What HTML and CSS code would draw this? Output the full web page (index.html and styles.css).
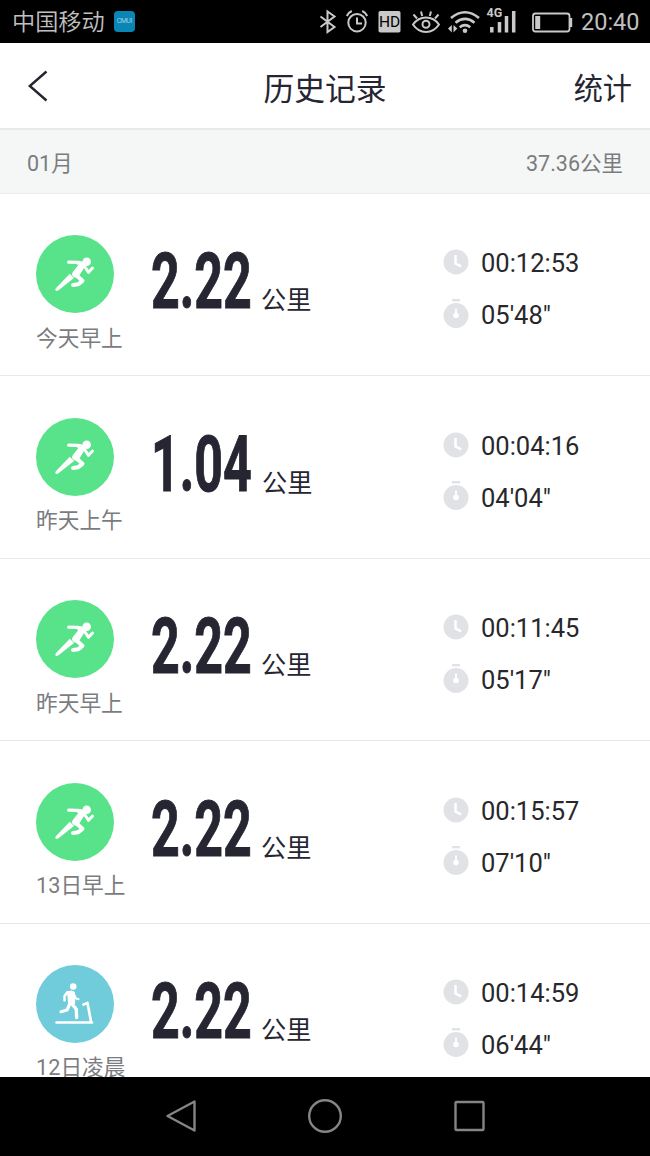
FILE: index.html
```html
<!DOCTYPE html>
<html lang="zh-CN">
<head>
<meta charset="utf-8">
<title>历史记录</title>
<link rel="stylesheet" href="styles.css">
</head>
<body>
<svg class="defs" width="0" height="0" aria-hidden="true">
  <symbol id="runner" viewBox="0 0 78 78">
    <g fill="none" stroke="#fff" stroke-linecap="round" stroke-linejoin="round">
      <path d="M32.700 27.200l8 .2 5 2" stroke-width="3.300"/>
      <path d="M49 32l3.500 5.300 4-4.300" stroke-width="3"/>
      <path d="M40.500 40.500l6 5.300-4.500 3.500-5 .6" stroke-width="4"/>
    </g>
    <path d="M41.500 25.800q4-.2 6.500 2.200q2.200 2.600 0 5l-5.700 9.200q-3 1.600-5.700-1.200q-1.400-2 .2-4l5.200-6.600z" fill="#fff"/>
    <path d="M33.800 38.700l4.200 4.300-15.800 12.500q-2.500 1.200-2.900-.8q0-.8 1-1.900z" fill="#fff"/>
    <circle cx="50.700" cy="26.700" r="4.300" fill="#fff"/>
  </symbol>
  <symbol id="treadmill" viewBox="0 0 78 78">
    <circle cx="37.200" cy="21.500" r="3.300" fill="#fff"/>
    <path d="M31.500 26.800q4.500-2 7 .5l.2 11.500-6 .5z" fill="#fff" stroke="#fff" stroke-linejoin="round"/>
    <g fill="none" stroke="#fff" stroke-linecap="round" stroke-linejoin="round">
      <path d="M31.500 27l-3 4v4.500" stroke-width="2.400"/>
      <path d="M38 29.500l2 4 2.500 .7" stroke-width="2.200"/>
      <path d="M34 38.500l-3 6.500-6 1.700" stroke-width="3.200"/>
      <path d="M36 39l4.200 5 .5 8.500" stroke-width="3.400"/>
      <path d="M20.500 57.500h35.500M47.500 39.500l4-1.500 3.500 18.500" stroke-width="2.700"/>
    </g>
  </symbol>
  <symbol id="clock" viewBox="0 0 26 26">
    <circle cx="13" cy="13" r="12.500" fill="#e1e2e5"/>
    <path d="M12.500 6v8.500l5.700 2.800" fill="none" stroke="#fff" stroke-width="2.500"/>
  </symbol>
  <symbol id="stopwatch" viewBox="0 0 26 30">
    <path d="M9 1.200h8" stroke="#e1e2e5" stroke-width="2.400"/>
    <circle cx="13" cy="16.500" r="12.500" fill="#e1e2e5"/>
    <path d="M13 9.500v6" stroke="#fff" stroke-width="1.800"/>
    <circle cx="13" cy="16.500" r="2.800" fill="#fff"/>
  </symbol>
</svg>
<div class="screen">
  <div class="status">
    <span class="carrier">中国移动</span>
    <span class="app-badge">CMUI</span>
    <svg class="status-icons" viewBox="310 0 270 43" width="270" height="43" fill="none" stroke="#c9c9c9" stroke-width="2">
      <path d="M320.500 16.500l14 10.500-7 5V11.500l7 5-14 10.500" stroke-width="2"/>
      <circle cx="357" cy="22.700" r="8.700"/>
      <path d="M357 17.500v6h5M346.800 16q1.500-3.500 5-5M367.200 16q-1.500-3.500-5-5"/>
      <rect x="378.500" y="11" width="22" height="21.500" rx="1.800" fill="#c9c9c9" stroke="none"/>
      <text x="389.500" y="26.700" text-anchor="middle" class="hd">HD</text>
      <path d="M413 24.500q5-7 13-7t13 7q-5 7.500-13 7.500t-13-7.500z"/>
      <circle cx="426" cy="24.300" r="3.500"/>
      <path d="M413.500 14.500l3.500 4M421 11.500l1.200 4.500M431 11.500l-1.200 4.500M438.500 14.500l-3.500 4"/>
      <path d="M451 18q14-11.500 28 0M455.500 22.700q9.500-7.500 19 0M459.700 27.200q5.300-4 10.600 0" stroke-width="2.600"/>
      <circle cx="465" cy="30.700" r="2.300" fill="#c9c9c9" stroke="none"/>
      <path d="M451.800 25v7.500l-3.800-4zM453.500 25v7.500l3.800-4z" fill="#c9c9c9" stroke="none"/>
      <text x="486.500" y="16.500" class="net">4G</text>
      <path d="M491.800 32.500v-5.500M499.500 32.500v-10.500M506.500 32.500v-16.500M513.700 32.500V11" stroke-width="3.500"/>
      <rect x="533" y="13.500" width="36.500" height="18" rx="2.500" stroke-width="1.800"/>
      <path d="M571 18v9" stroke-width="2.400"/>
      <path d="M537.700 16v13" stroke-width="5"/>
    </svg>
    <span class="time">20:40</span>
  </div>

  <div class="header">
    <svg class="back" width="22" height="34" viewBox="0 0 22 34"><path d="M19.500 2.500L2.800 17 19.500 31.500" fill="none" stroke="#262633" stroke-width="2.400"/></svg>
    <span class="title">历史记录</span>
    <span class="stats">统计</span>
  </div>

  <div class="month"><span>01月</span><span>37.36公里</span></div>

  <div class="list">
    <div class="row">
      <div class="kind"><svg class="disc run"><use href="#runner"/></svg><span class="when">今天早上</span></div>
      <div class="dist"><span class="num"><span class="digits">2.22</span></span><span class="unit">公里</span></div>
      <div class="facts">
        <div class="fact"><svg class="ic-clock"><use href="#clock"/></svg><span>00:12:53</span></div>
        <div class="fact"><svg class="ic-stop"><use href="#stopwatch"/></svg><span>05'48"</span></div>
      </div>
    </div>
    <div class="row">
      <div class="kind"><svg class="disc run"><use href="#runner"/></svg><span class="when">昨天上午</span></div>
      <div class="dist"><span class="num wide"><span class="digits">1.04</span></span><span class="unit">公里</span></div>
      <div class="facts">
        <div class="fact"><svg class="ic-clock"><use href="#clock"/></svg><span>00:04:16</span></div>
        <div class="fact"><svg class="ic-stop"><use href="#stopwatch"/></svg><span>04'04"</span></div>
      </div>
    </div>
    <div class="row">
      <div class="kind"><svg class="disc run"><use href="#runner"/></svg><span class="when">昨天早上</span></div>
      <div class="dist"><span class="num"><span class="digits">2.22</span></span><span class="unit">公里</span></div>
      <div class="facts">
        <div class="fact"><svg class="ic-clock"><use href="#clock"/></svg><span>00:11:45</span></div>
        <div class="fact"><svg class="ic-stop"><use href="#stopwatch"/></svg><span>05'17"</span></div>
      </div>
    </div>
    <div class="row">
      <div class="kind"><svg class="disc run"><use href="#runner"/></svg><span class="when">13日早上</span></div>
      <div class="dist"><span class="num"><span class="digits">2.22</span></span><span class="unit">公里</span></div>
      <div class="facts">
        <div class="fact"><svg class="ic-clock"><use href="#clock"/></svg><span>00:15:57</span></div>
        <div class="fact"><svg class="ic-stop"><use href="#stopwatch"/></svg><span>07'10"</span></div>
      </div>
    </div>
    <div class="row">
      <div class="kind"><svg class="disc indoor"><use href="#treadmill"/></svg><span class="when">12日凌晨</span></div>
      <div class="dist"><span class="num"><span class="digits">2.22</span></span><span class="unit">公里</span></div>
      <div class="facts">
        <div class="fact"><svg class="ic-clock"><use href="#clock"/></svg><span>00:14:59</span></div>
        <div class="fact"><svg class="ic-stop"><use href="#stopwatch"/></svg><span>06'44"</span></div>
      </div>
    </div>
  </div>

  <div class="nav">
    <svg width="34" height="36" viewBox="0 0 34 36"><path d="M30.500 3.500v29L3.500 18z"/></svg>
    <svg width="36" height="36" viewBox="0 0 36 36"><circle cx="18" cy="18" r="15.800"/></svg>
    <svg width="34" height="36" viewBox="0 0 34 36"><rect x="3.500" y="4" width="28" height="28" rx="1"/></svg>
  </div>
</div>
</body>
</html>
```
FILE: styles.css
```css
* { box-sizing: border-box; }
body {
  margin: 0;
  font-family: Roboto, "Noto Sans CJK SC", sans-serif;
  color: #262633;
  background: #fff;
}
.defs { display: block; }
.screen {
  width: 650px;
  height: 1156px;
  display: flex;
  flex-direction: column;
  overflow: hidden;
}
.status {
  flex: none;
  height: 43px;
  background: #000;
  color: #c0c0c0;
  display: flex;
  align-items: center;
  padding: 0 11px 0 12px;
  line-height: 43px;
}
.carrier { font-size: 23.2px; font-weight: 350; margin-top: 2px; }
.app-badge {
  width: 21px;
  height: 21px;
  margin-left: 9px;
  border-radius: 4px;
  background: #0a86b4;
  color: #9fd0e2;
  font-size: 7px;
  line-height: 21px;
  text-align: center;
  letter-spacing: -0.5px;
}
.status-icons { margin-left: auto; margin-right: 1px; flex: none; }
.hd { font: 400 15.500px Roboto, sans-serif; fill: #000; stroke: none; }
.net { font: 700 12.500px Roboto, sans-serif; fill: #c9c9c9; stroke: none; }
.time { font-size: 23.500px; width: 58px; margin-top: 2px; }
.header {
  flex: none;
  height: 87px;
  border-bottom: 2px solid #e7eae9;
  display: grid;
  grid-template-columns: 1fr auto 1fr;
  align-items: center;
  padding: 1px 18px 0 27px;
}
.back { display: block; }
.title { font-size: 30.800px; padding-right: 9px; margin-top: 0; }
.stats { font-size: 29.200px; justify-self: end; margin-top: -1px; }
.month {
  flex: none;
  height: 64px;
  background: #f4f7f6;
  border-bottom: 1px solid #ebeeed;
  display: flex;
  justify-content: space-between;
  align-items: center;
  padding: 0 27px;
  font-size: 21.500px;
  color: #7b7c80;
}
.list { flex: 1; overflow: hidden; }
.row {
  height: 182.400px;
  border-bottom: 1px solid #e9e9eb;
  display: grid;
  grid-template-columns: 115px 292px 1fr;
  padding: 41.400px 0 0 36px;
}
.kind { display: flex; flex-direction: column; }
.disc { width: 78px; height: 78px; border-radius: 50%; }
.run { background: #58e28a; }
.indoor { background: #70cbda; }
.when {
  font-size: 21.700px;
  line-height: 32px;
  margin-top: 9.500px;
  color: #7b7c80;
  white-space: nowrap;
}
.dist { display: flex; align-items: baseline; height: 90px; }
.num { width: 110px; font-size: 78px; line-height: 93px; }
.wide { width: 111px; }
.digits {
  display: inline-block;
  font-weight: 700;
  -webkit-text-stroke: 1px #262633;
  transform: scaleX(0.643);
  transform-origin: 0 50%;
}
.unit { font-size: 25.200px; position: relative; top: 1px; }
.facts { display: flex; flex-direction: column; gap: 18px; padding-top: 11px; }
.fact { display: flex; align-items: center; gap: 12px; height: 34px; font-size: 25.500px; color: #28282c; }
.ic-clock { width: 26px; height: 26px; margin-top: -2px; }
.ic-stop { width: 26px; height: 30px; margin-top: -3px; }
.nav {
  flex: none;
  height: 79px;
  background: #000;
  display: flex;
  justify-content: space-between;
  align-items: center;
  padding: 0 164px 1px;
}
.nav svg { fill: none; stroke: #858585; stroke-width: 2.400; stroke-linejoin: round; }
```
